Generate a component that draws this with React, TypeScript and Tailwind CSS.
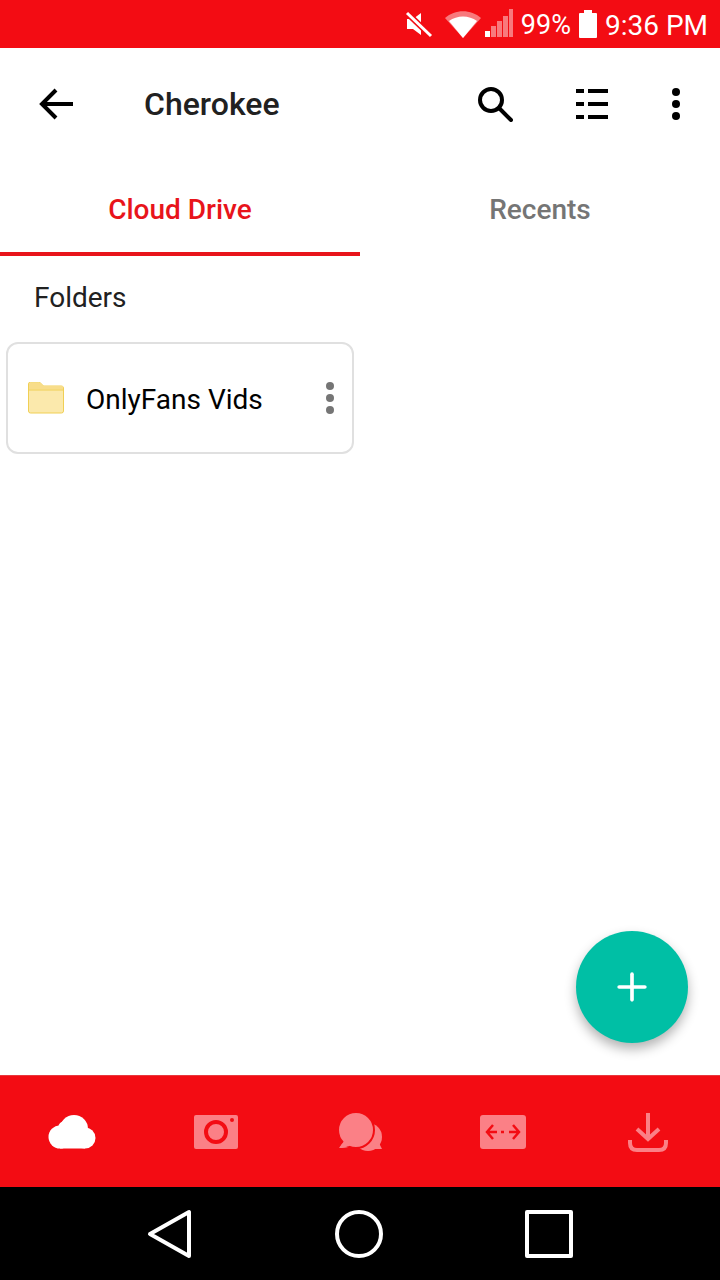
import { Plus } from 'lucide-react'

function MuteIcon() {
  return (
    <svg width="28" height="28" viewBox="0 0 28 28" fill="white">
      <path d="M2 9h6l8-6v22l-8-6H2z" />
      <path d="M1 2l25 24" stroke="#f30c13" strokeWidth="6" />
      <path d="M2 3l24 23" stroke="white" strokeWidth="3" />
    </svg>
  )
}

function WifiIcon() {
  return (
    <svg width="36" height="28" viewBox="0 0 36 28">
      <path d="M0 8C10 -1 26 -1 36 8L18 28z" fill="white" fillOpacity="0.45" />
      <path d="M4 11C12 5 24 5 32 11L18 28z" fill="white" />
    </svg>
  )
}

function SignalIcon() {
  return (
    <svg width="30" height="30" viewBox="0 0 30 30">
      <rect x="0" y="22" width="5" height="6" fill="white" />
      <rect x="6" y="17" width="5" height="11" fill="white" fillOpacity="0.45" />
      <rect x="12" y="12" width="5" height="16" fill="white" fillOpacity="0.45" />
      <rect x="18" y="7" width="5" height="21" fill="white" fillOpacity="0.45" />
      <rect x="24" y="0" width="4" height="28" fill="white" fillOpacity="0.45" />
    </svg>
  )
}

function BatteryIcon() {
  return (
    <svg width="18" height="28" viewBox="0 0 18 28" fill="white">
      <path d="M5 0h8v3h4a1 1 0 0 1 1 1v23a1 1 0 0 1-1 1H1a1 1 0 0 1-1-1V4a1 1 0 0 1 1-1h4z" />
    </svg>
  )
}

function StatusBar() {
  return (
    <div className="h-12 bg-[#f30c13] flex items-center justify-end pr-3 text-white text-[28px] leading-none">
      <div className="mr-[1px]"><MuteIcon /></div>
      <div className="ml-[11px]"><WifiIcon /></div>
      <div className="ml-[4px]"><SignalIcon /></div>
      <span className="ml-[6px] pt-[3px] text-[27px]">99%</span>
      <div className="ml-[8px]"><BatteryIcon /></div>
      <span className="ml-[8px] pt-[3px]">9:36 PM</span>
    </div>
  )
}

function Toolbar() {
  return (
    <div className="h-28 flex items-center text-[#212121]">
      <svg className="ml-[39px]" width="34" height="32" viewBox="0 0 34 32" fill="none" stroke="black" strokeWidth="4">
        <path d="M34 16H3M17 2L3 16l14 14" />
      </svg>
      <div className="ml-[71px] flex-1 text-[32px] font-medium">Cherokee</div>
      <svg width="36" height="36" viewBox="0 0 36 36" fill="none" stroke="black" strokeWidth="4">
        <circle cx="14" cy="14" r="11" />
        <path d="M22 22l12 12" strokeLinecap="round" />
      </svg>
      <svg className="ml-[63px]" width="34" height="30" viewBox="0 0 34 30" fill="black">
        <rect x="0" y="0" width="8" height="4" />
        <rect x="12" y="0" width="20" height="4" />
        <rect x="0" y="13" width="8" height="4" />
        <rect x="12" y="13" width="20" height="4" />
        <rect x="0" y="26" width="8" height="4" />
        <rect x="12" y="26" width="20" height="4" />
      </svg>
      <svg className="ml-[61px] mr-[39px]" width="10" height="34" viewBox="0 0 10 34" fill="black">
        <circle cx="5" cy="5" r="4" />
        <circle cx="5" cy="17" r="4" />
        <circle cx="5" cy="29" r="4" />
      </svg>
    </div>
  )
}

function Tabs() {
  return (
    <div className="h-24 flex text-[28px] font-medium">
      <div className="w-1/2 pt-[8px] flex items-center justify-center text-[#e8141b] border-b-4 border-[#e8141b]">Cloud Drive</div>
      <div className="w-1/2 pt-[4px] flex items-center justify-center text-[#757575]">Recents</div>
    </div>
  )
}

function FolderCard() {
  return (
    <div className="mt-[27px] mx-[6px] w-[348px] h-[112px] border-2 border-[#e0e0e0] rounded-xl flex items-center">
      <svg className="ml-[20px]" width="36" height="32" viewBox="0 0 36 32">
        <path d="M0.500 2a2 2 0 0 1 2-2h8a2 2 0 0 1 2 1l3 3h18a2 2 0 0 1 2 2v23a2 2 0 0 1-2 2h-31a2 2 0 0 1-2-2z" fill="#fbe9ac" stroke="#f0cf55" strokeWidth="1" />
        <path d="M1 1h11l3 3 h20v3.500H1z" fill="#f8dd8a" />
        <path d="M0 8h36" stroke="#f0cf55" strokeWidth="1" />
      </svg>
      <span className="ml-[22px] pt-[3px] flex-1 text-[28px] text-black">OnlyFans Vids</span>
      <svg className="mr-[17px]" width="10" height="34" viewBox="0 0 10 34" fill="#757575">
        <circle cx="5" cy="5" r="4" />
        <circle cx="5" cy="17" r="4" />
        <circle cx="5" cy="29" r="4" />
      </svg>
    </div>
  )
}

function BottomNav() {
  return (
    <div className="h-[112px] bg-[#f30c13] flex items-center border-t border-[#e8383d]">
      <svg className="ml-[48px]" width="48" height="36" viewBox="0 0 48 36" fill="white">
        <circle cx="26" cy="15" r="14" />
        <circle cx="17" cy="14" r="7" />
        <circle cx="12" cy="23" r="11.500" />
        <circle cx="37" cy="24" r="10.500" />
        <rect x="12" y="20" width="25" height="14.500" />
      </svg>
      <svg className="ml-[98px]" width="44" height="36" viewBox="0 0 44 36">
        <rect width="44" height="34" y="1" rx="2" fill="#fb8086" />
        <circle cx="22" cy="18" r="10" fill="none" stroke="#f30c13" strokeWidth="4" />
        <circle cx="38" cy="6" r="2" fill="#f30c13" />
      </svg>
      <svg className="ml-[100px]" width="46" height="42" viewBox="0 0 46 42" fill="#fb8086">
        <circle cx="30" cy="26" r="14" />
        <path d="M26 38h18l-3-6z" />
        <path d="M6 30L1 37c4 0 8 0 11-2z" />
        <circle cx="18" cy="19" r="18" stroke="#f30c13" strokeWidth="2" />
        <path d="M6 30L2 36c4 0 8 0 11-2z" />
      </svg>
      <svg className="ml-[96px]" width="46" height="36" viewBox="0 0 46 36">
        <rect width="46" height="34" y="1" rx="3" fill="#fb8086" />
        <path d="M13 11l-6 7 6 7M7 18h10M21 18h3M29 18h10M33 11l6 7-6 7" fill="none" stroke="#f30c13" strokeWidth="2.500" />
      </svg>
      <svg className="ml-[102px]" width="40" height="40" viewBox="0 0 40 40" fill="none" stroke="#fb8086" strokeWidth="4">
        <path d="M20 1v26M9 17l11 10 11-10" />
        <path d="M2 28v3c0 5 3 7 7 7h22c4 0 7-2 7-7v-3" />
      </svg>
    </div>
  )
}

function SystemNav() {
  return (
    <div className="h-[93px] bg-black flex items-center">
      <svg className="ml-[147px]" width="46" height="50" viewBox="0 0 46 50" fill="none" stroke="white" strokeWidth="4" strokeLinejoin="round">
        <path d="M42 3v44L3 25z" />
      </svg>
      <svg className="ml-[141px]" width="50" height="50" viewBox="0 0 50 50" fill="none" stroke="white" strokeWidth="4">
        <circle cx="25" cy="25" r="22" />
      </svg>
      <svg className="ml-[140px]" width="50" height="50" viewBox="0 0 50 50" fill="none" stroke="white" strokeWidth="4" strokeLinejoin="round">
        <rect x="3" y="3" width="44" height="44" />
      </svg>
    </div>
  )
}

export default function App() {
  return (
    <div className="h-[1280px] w-[720px] flex flex-col bg-white font-['Roboto',sans-serif]">
      <StatusBar />
      <Toolbar />
      <Tabs />
      <div className="relative flex-1">
        <div className="mt-[25px] ml-[34px] text-[28px] leading-[34px] text-[#212121]">Folders</div>
        <FolderCard />
        <button className="absolute left-[576px] top-[675px] w-[112px] h-[112px] rounded-full bg-[#00bfa5] flex items-center justify-center shadow-[0_6px_12px_rgba(0,0,0,0.3)]">
          <Plus size={44} color="white" strokeWidth={2} />
        </button>
      </div>
      <BottomNav />
      <SystemNav />
    </div>
  )
}
